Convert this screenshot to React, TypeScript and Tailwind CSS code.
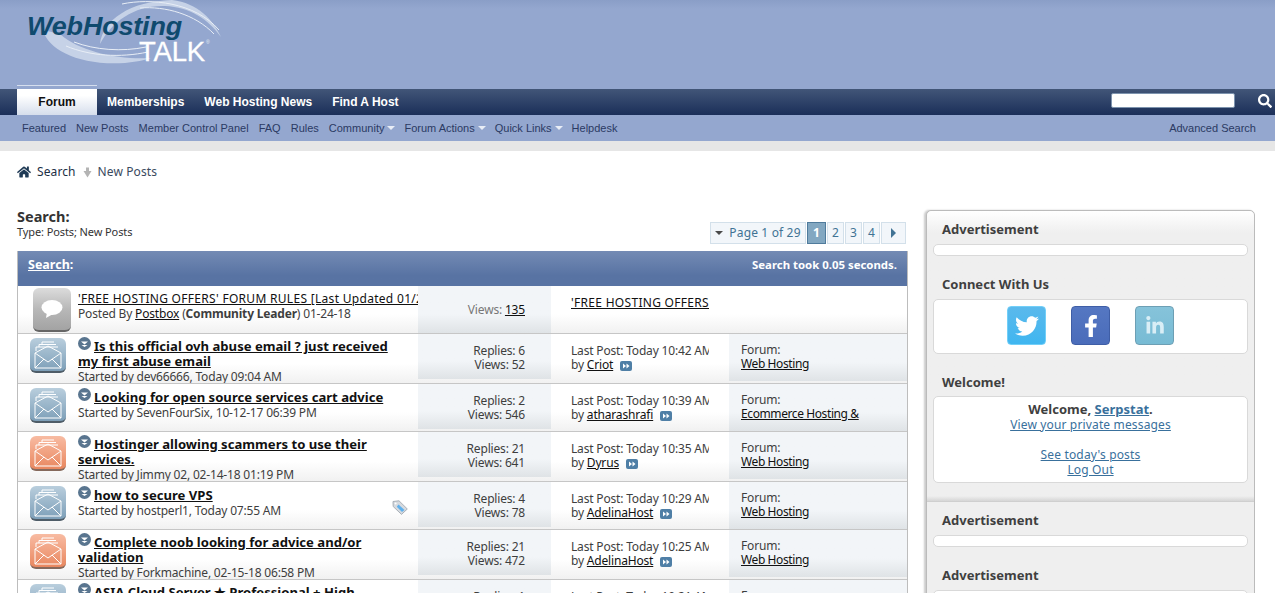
import React from "react";
import { FaFacebookF, FaHome, FaLinkedinIn, FaSearch, FaTwitter } from "react-icons/fa";

type Thread = {
  title: string;
  tall?: boolean;
  meta: string;
  tone: "blue" | "orange";
  replies: string;
  views: string;
  time: string;
  by: string;
  forum: string;
  tagged?: boolean;
};

const threads: Thread[] = [
  { title: "Is this official ovh abuse email ? just received\nmy first abuse email", tall: true, meta: "Started by dev66666, Today 09:04 AM", tone: "blue", replies: "6", views: "52", time: "10:42 AM", by: "Criot", forum: "Web Hosting" },
  { title: "Looking for open source services cart advice", meta: "Started by SevenFourSix, 10-12-17 06:39 PM", tone: "blue", replies: "2", views: "546", time: "10:39 AM", by: "atharashrafi", forum: "Ecommerce Hosting &" },
  { title: "Hostinger allowing scammers to use their\nservices.", tall: true, meta: "Started by Jimmy 02, 02-14-18 01:19 PM", tone: "orange", replies: "21", views: "641", time: "10:35 AM", by: "Dyrus", forum: "Web Hosting" },
  { title: "how to secure VPS", meta: "Started by hostperl1, Today 07:55 AM", tone: "blue", replies: "4", views: "78", time: "10:29 AM", by: "AdelinaHost", forum: "Web Hosting", tagged: true },
  { title: "Complete noob looking for advice and/or\nvalidation", tall: true, meta: "Started by Forkmachine, 02-15-18 06:58 PM", tone: "orange", replies: "21", views: "472", time: "10:25 AM", by: "AdelinaHost", forum: "Web Hosting" },
  { title: "ASIA Cloud Server ★ Professional + High", tall: true, meta: "Started by hostperl1, Today 07:12 AM", tone: "blue", replies: "1", views: "33", time: "10:21 AM", by: "Criot", forum: "Web Hosting" },
];

const Logo = () => (
  <svg width="240" height="70" viewBox="0 0 240 70" className="block">
    <path d="M100 44C103 20 130 1 172 0C198 3 213 20 221 37C208 19 190 7 165 6C135 5 112 21 100 44Z" fill="#c6d2e7" />
    <path d="M122 4C150 -2 195 2 219 30M140 8C165 6 195 14 214 34" fill="none" stroke="#e8eef6" strokeWidth="1" />
    <path d="M43 30C48 50 80 66 125 63C135 62 145 60 151 58C120 60 80 52 60 34Z" fill="#c6d2e7" />
    <path d="M66 46C90 56 120 58 148 52M74 42C95 50 122 52 146 47" fill="none" stroke="#e8eef6" strokeWidth="1" />
    <text x="27" y="35" fontFamily="Liberation Sans, sans-serif" fontWeight="700" fontStyle="italic" fontSize="26" fill="#0f4a6e" textLength="155" lengthAdjust="spacingAndGlyphs">WebHosting</text>
    <text x="139" y="61" fontFamily="Liberation Sans, sans-serif" fontSize="27" fill="#ffffff" stroke="#ffffff" strokeWidth="0.3" textLength="66" lengthAdjust="spacingAndGlyphs">TALK</text>
    <text x="206" y="44" fontFamily="Liberation Sans, sans-serif" fontSize="5" fill="#e8eef6">®</text>
  </svg>
);

const Caret = () => (
  <span className="ml-[3px] mr-[-1px] inline-block h-0 w-0 border-x-[4px] border-t-[4px] border-x-transparent border-t-[#e8edf6] align-[2px]" />
);

const Envelope = () => (
  <svg width="36" height="33" viewBox="0 0 36 33" fill="none" stroke="#fff" strokeWidth="1">
    <path d="M6 13V9H9V6.5H12V4H24M12 6.5H26M9 9H28" />
    <path d="M5 15L18 8 31 15V30H5ZM5 15L18 24 31 15M5 30L14 21M31 30L22 21" strokeLinejoin="round" />
  </svg>
);

const ThreadIcon = ({ tone }: { tone: "blue" | "orange" }) => (
  <div
    className={
      tone === "blue"
        ? "mt-1 h-[35px] w-[36px] rounded-[6px] border-b-2 border-[#4f5d68] bg-linear-to-b from-[#b9cedd] to-[#7d9fb8]"
        : "mt-1 h-[35px] w-[36px] rounded-[6px] border-b-2 border-[#85695c] bg-linear-to-b from-[#f8bba2] to-[#e8875f]"
    }
  >
    <Envelope />
  </div>
);

const UnreadDot = () => (
  <svg width="13" height="13" viewBox="0 0 13 13" className="mr-[3px] inline-block align-[1px]">
    <circle cx="6.5" cy="6.5" r="6.5" fill="#59758f" />
    <path d="M3 4.5H10L6.5 7.5ZM3.5 8H9.5L6.5 10Z" fill="#fff" />
  </svg>
);

const LastPostArrow = () => (
  <svg width="12" height="10" viewBox="0 0 12 10" className="ml-[7px] inline-block">
    <rect width="12" height="10" rx="2" fill="#4f7fa6" />
    <path d="M3 2.5L6 5 3 7.5ZM6.5 2.5L9.5 5 6.5 7.5Z" fill="#fff" />
  </svg>
);

const TagIcon = () => (
  <svg width="16" height="15" viewBox="0 0 16 15" className="absolute right-[10px] top-[18px]">
    <path d="M1 1.5L7 .8 15.3 9 9.5 14.4 1.2 6.5Z" fill="#d6dadf" stroke="#a9b0b8" />
    <path d="M6.5 4.5L12.5 10 10 12 4.8 6.8Z" fill="#5fb0ec" />
    <circle cx="3.6" cy="3.6" r="1" fill="#fff" />
  </svg>
);

const ThreadRow = ({ t }: { t: Thread }) => (
  <div className={t.tall ? "grid h-[50px] grid-cols-[400px_133px_178px_178px] overflow-hidden border-b border-[#c6c6c6] bg-linear-to-b from-white from-60% to-[#f1f1f1]" : "grid h-[48px] grid-cols-[400px_133px_178px_178px] overflow-hidden border-b border-[#c6c6c6] bg-linear-to-b from-white from-60% to-[#f1f1f1]"}>
    <div className="relative flex pl-[12px]">
      <ThreadIcon tone={t.tone} />
      <div className={t.tall ? "ml-[12px] pt-[3px]" : "ml-[12px] pt-[4px]"}>
        <div className="whitespace-pre text-[13.1px] font-bold leading-[15px] tracking-normal text-[#111]">
          <UnreadDot />
          <a className="underline">{t.title}</a>
        </div>
        <div className="leading-[15px]">{t.meta}</div>
      </div>
      {t.tagged && <TagIcon />}
    </div>
    <div className="h-[45px] bg-linear-to-b from-[#f2f5f8] from-60% to-[#dfe3e6] pr-[26px] pt-[10px] text-right leading-[14px]">
      <div>Replies: {t.replies}</div>
      <div>Views: {t.views}</div>
    </div>
    <div className="pl-[20px] pt-[10px] leading-[14px]">
      <div className="w-[138px] overflow-hidden whitespace-nowrap">Last Post: Today {t.time}</div>
      <div>
        by <a className="text-[#111] underline">{t.by}</a>
        <LastPostArrow />
      </div>
    </div>
    <div className="h-[47px] bg-linear-to-b from-[#f2f5f8] from-60% to-[#dfe3e6] pl-[12px] pt-[9px] leading-[14px]">
      <div>Forum:</div>
      <a className="tracking-[-0.4px] text-[#111] underline">{t.forum}</a>
    </div>
  </div>
);

const StickyRow = () => (
  <div className="grid h-[48px] grid-cols-[400px_133px_178px_178px] overflow-hidden border-b border-[#c6c6c6] bg-linear-to-b from-white from-60% to-[#f1f1f1]">
    <div className="flex min-w-0 pl-[15px]">
      <div className="mt-[2px] flex h-[44px] w-[38px] shrink-0 items-center justify-center rounded-[6px] border-b-2 border-[#666] bg-linear-to-b from-[#dcdcdc] via-[#b8b8b8] to-[#a3a3a3]">
        <svg width="22" height="20" viewBox="0 0 22 20">
          <ellipse cx="11" cy="8.5" rx="10.5" ry="7.5" fill="#fff" />
          <path d="M6 13L5 19 12 15Z" fill="#fff" />
        </svg>
      </div>
      <div className="ml-[7px] min-w-0 overflow-hidden pt-[5px]">
        <a className="block whitespace-nowrap leading-[15px] tracking-[0.3px] text-[#111] underline">'FREE HOSTING OFFERS' FORUM RULES [Last Updated 01/24/18]</a>
        <div className="leading-[15px]">
          Posted By <a className="text-[#111] underline">Postbox</a> (<b>Community Leader</b>) 01-24-18
        </div>
      </div>
    </div>
    <div className="bg-linear-to-b from-[#f2f5f8] from-60% to-[#dfe3e6] pr-[26px] pt-[17px] text-right leading-[14px] text-[#777]">
      Views: <a className="text-[#111] underline">135</a>
    </div>
    <div className="pl-[20px] pt-[10px] leading-[14px]">
      <a className="block w-[138px] overflow-hidden whitespace-nowrap tracking-[0.3px] text-[#111] underline">'FREE HOSTING OFFERS' FORUM RULES</a>
    </div>
    <div />
  </div>
);

const PageNav = () => (
  <div className="mr-[2px] mt-[12px] flex h-[22px] gap-px tracking-[0.15px] text-[#417394]">
    <div className="flex w-[96px] items-center justify-center gap-[6px] border border-[#d3e0ea] bg-[#f2f6fa]">
      <span className="h-0 w-0 border-x-[4px] border-t-[4px] border-x-transparent border-t-[#4a4a4a]" />
      Page 1 of 29
    </div>
    <div className="flex w-[19px] items-center justify-center border border-[#4f7b9c] bg-[#82a7c1] font-bold text-white">1</div>
    {["2", "3", "4"].map((n) => (
      <div key={n} className="flex w-[17px] items-center justify-center border border-[#d3e0ea] bg-[#f2f6fa]">{n}</div>
    ))}
    <div className="flex w-[25px] items-center justify-center border border-[#d3e0ea] bg-[#f2f6fa]">
      <span className="h-0 w-0 border-y-[5px] border-l-[5px] border-y-transparent border-l-[#417394]" />
    </div>
  </div>
);

const SideHeading = ({ children }: { children: React.ReactNode }) => (
  <h3 className="mb-[7px] pl-[15px] text-[13px] font-bold leading-[16px] tracking-normal text-[#3f3f3f]">{children}</h3>
);

const SideBox = ({ children, className }: { children?: React.ReactNode; className: string }) => (
  <div className={"mx-[6px] rounded-[5px] border border-[#d9d9d9] bg-white " + className}>{children}</div>
);

const Sidebar = () => (
  <aside className="w-[329px] shrink-0 rounded-t-[5px] border border-[#bbb] bg-[#efefef] shadow-[-2px_0_2px_#ccc]">
    <div className="rounded-t-[5px] bg-linear-to-b from-white to-[#efefef] to-[22px] pt-[10px]">
      <SideHeading>Advertisement</SideHeading>
      <SideBox className="h-[12px]" />
      <div className="h-[20px]" />
      <SideHeading>Connect With Us</SideHeading>
      <SideBox className="flex h-[55px] justify-center gap-[25px] pt-[6px]">
        <div className="flex h-[39px] w-[39px] items-center justify-center rounded-[4px] border border-[#72cff8] bg-linear-to-b from-[#5ab9ec] to-[#3fb6f0] text-[24px] text-white">
          <FaTwitter />
        </div>
        <div className="flex h-[39px] w-[39px] items-center justify-center rounded-[4px] border border-[#3f5ea6] bg-linear-to-b from-[#5577c2] to-[#4a6cba] text-[22px] text-white">
          <FaFacebookF />
        </div>
        <div className="flex h-[39px] w-[39px] items-center justify-center rounded-[4px] border border-[#6d9fb4] bg-linear-to-b from-[#86c3da] to-[#77bbd4] text-[20px] text-[#d9eef6]">
          <FaLinkedinIn />
        </div>
      </SideBox>
      <div className="h-[20px]" />
      <SideHeading>Welcome!</SideHeading>
      <SideBox className="-mt-px h-[87px] pt-[5px] text-center leading-[15px] tracking-[0.15px] text-[#39709c]">
        <div className="text-[13px] font-bold tracking-normal text-[#3f3f3f]">
          Welcome, <a className="text-[#39709c] underline">Serpstat</a>.
        </div>
        <a className="underline">View your private messages</a>
        <div className="h-[15px]" />
        <a className="block underline">See today's posts</a>
        <a className="block underline">Log Out</a>
      </SideBox>
      <div className="mt-[13px] h-[6px] border-b border-[#cfcfcf] bg-linear-to-b from-[#efefef] to-[#d6d6d6]" />
    </div>
    <div className="pt-[10px]">
      <SideHeading>Advertisement</SideHeading>
      <SideBox className="h-[12px]" />
      <div className="h-[20px]" />
      <SideHeading>Advertisement</SideHeading>
      <SideBox className="h-[12px]" />
    </div>
  </aside>
);

export default function App() {
  return (
    <div className="h-[593px] overflow-hidden bg-white font-['Noto_Sans',sans-serif] text-[12px] tracking-[-0.18px] text-[#3e3e3e]">
      <header className="h-[89px] bg-linear-to-b from-[#8a9ec7] from-0% to-[#94a7cf] to-10%">
        <Logo />
      </header>
      <nav className="relative flex h-[26px] items-stretch bg-linear-to-b from-[#425678] to-[#1b2f59] pl-[17px] font-['Liberation_Sans',sans-serif] text-[12px] font-bold tracking-normal text-white">
        <a className="flex w-[80px] items-center justify-center bg-linear-to-b from-white from-25% to-[#d6deec] text-[#111]">Forum</a>
        <div className="ml-[10px] flex items-center gap-[20px]">
          <a>Memberships</a>
          <a>Web Hosting News</a>
          <a>Find A Host</a>
        </div>
        <div className="absolute left-[17px] top-[-4px] h-px w-[80px] bg-[#d5deee]" />
        <div className="absolute right-[3px] top-[4px] flex items-center gap-[23px]">
          <input className="h-[15px] w-[124px] rounded-[2px] border border-[#7d93ae] bg-white" />
          <FaSearch className="text-[14px]" />
        </div>
      </nav>
      <div className="flex h-[26px] items-center justify-between bg-[#94a7cf] pl-[22px] pr-[19px] font-['Liberation_Sans',sans-serif] text-[11px] tracking-normal text-[#2b3a63]">
        <div className="flex gap-[10px]">
          <a>Featured</a>
          <a>New Posts</a>
          <a>Member Control Panel</a>
          <a>FAQ</a>
          <a>Rules</a>
          <a>Community<Caret /></a>
          <a>Forum Actions<Caret /></a>
          <a>Quick Links<Caret /></a>
          <a>Helpdesk</a>
        </div>
        <a>Advanced Search</a>
      </div>
      <div className="h-[10px] bg-[#e6e6e6]" />

      <div className="px-[17px] pt-[14px]">
        <div className="mb-[31px] flex h-[14px] items-center tracking-[0.1px] text-[#1b2f45]">
          <FaHome className="mr-[6px] text-[14px] text-[#1f3a55]" />
          <a>Search</a>
          <svg width="9" height="11" viewBox="0 0 9 11" className="ml-[7px] mr-[6px]">
            <path d="M3 0.5H6V4H8.5L4.5 10.5 .5 4H3Z" fill="#b4b4b4" />
          </svg>
          <span className="text-[#3a4a5e]">New Posts</span>
        </div>

        <div className="flex gap-[18px]">
          <main className="w-[891px] shrink-0">
            <div className="flex h-[41px] justify-between">
              <div className="-mt-px">
                <h2 className="mb-px text-[14.5px] font-bold leading-[15px] tracking-normal text-[#333]">Search:</h2>
                <div className="text-[11px] leading-[14px] tracking-[-0.1px] text-[#333]">Type: Posts; New Posts</div>
              </div>
              <PageNav />
            </div>
            <div className="border-x border-[#bdbdbd]">
              <div className="flex h-[35px] items-start justify-between bg-linear-to-b from-[#748bb4] to-[#5873a3] to-70% pl-[10px] pr-[10px] pt-[5px] font-bold tracking-normal text-white">
                <div className="text-[12.5px]">
                  <a className="underline">Search</a>:
                </div>
                <div className="text-[11.4px]">Search took 0.05 seconds.</div>
              </div>
              <StickyRow />
              {threads.map((t) => (
                <ThreadRow key={t.title} t={t} />
              ))}
            </div>
          </main>
          <Sidebar />
        </div>
      </div>
    </div>
  );
}
